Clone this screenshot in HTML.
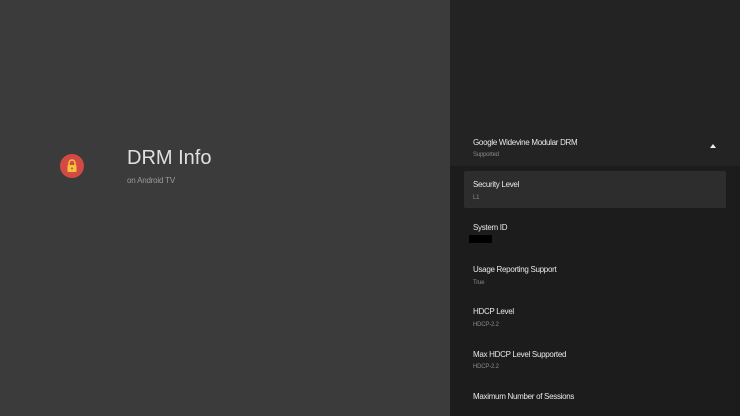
<!DOCTYPE html>
<html><head><style>
body{margin:0;width:740px;height:416px;overflow:hidden;font-family:"Liberation Sans",sans-serif;background:#3a3a3a;position:relative}
.left{position:absolute;left:0;top:0;width:450px;height:416px;background:#3b3b3b}
.right{position:absolute;left:450px;top:0;width:290px;height:416px;background:#1c1c1c}
.hdr{position:absolute;left:0;top:0;width:290px;height:166px;background:#232323}
.t{position:absolute;left:23px;color:#e8e8e8;font-size:8px;letter-spacing:-0.3px}
.s{position:absolute;left:23px;color:#8a8a8a;font-size:6px;letter-spacing:-0.2px}
.sel{position:absolute;left:14px;top:171px;width:262px;height:37px;background:#2d2d2d;border-radius:2px}
</style></head><body>
<div class="left">
<div style="position:absolute;left:60px;top:154px;width:24px;height:24px;border-radius:50%;background:#d34a43"></div>
<svg style="position:absolute;left:64px;top:157px" width="16" height="18" viewBox="0 0 16 18"><path d="M5 8V6a3 3 0 0 1 6 0v2" fill="none" stroke="#f2c23a" stroke-width="1.5"/><rect x="3.5" y="8" width="9" height="7" rx="1" fill="#f2c23a"/><circle cx="8" cy="11.5" r="1" fill="#d34a43"/></svg>
<div style="position:absolute;left:127px;top:147px;color:#e0e0e0;font-size:20px">DRM Info</div>
<div style="position:absolute;left:127px;top:176px;color:#9a9a9a;font-size:8px;letter-spacing:-0.2px">on Android TV</div>
</div>
<div class="right">
<div class="hdr"></div>
<div class="t" style="top:138px">Google Widevine Modular DRM</div>
<div class="s" style="top:152px">Supported</div>
<div style="position:absolute;left:260px;top:144px;width:0;height:0;border-left:3.5px solid transparent;border-right:3.5px solid transparent;border-bottom:4px solid #eee"></div>
<div class="sel"></div>
<div class="t" style="top:180px">Security Level</div>
<div class="s" style="top:195px">L1</div>
<div class="t" style="top:223px">System ID</div>
<div style="position:absolute;left:19px;top:235px;width:23px;height:8px;background:#000"></div>
<div class="t" style="top:265px">Usage Reporting Support</div>
<div class="s" style="top:280px">True</div>
<div class="t" style="top:307px">HDCP Level</div>
<div class="s" style="top:322px">HDCP-2.2</div>
<div class="t" style="top:350px">Max HDCP Level Supported</div>
<div class="s" style="top:364px">HDCP-2.2</div>
<div class="t" style="top:392px">Maximum Number of Sessions</div>
</div>
</body></html>
